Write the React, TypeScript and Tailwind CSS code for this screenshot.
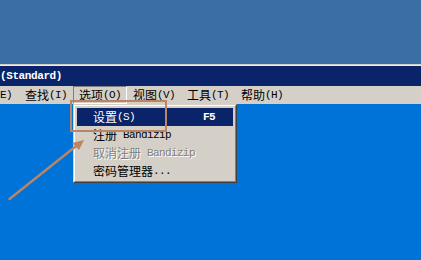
import React from "react";

const CJK = "font-['Noto_Sans_CJK_SC',sans-serif] text-[12px] leading-none";
const MONO = "font-['Liberation_Mono','Courier_New',monospace] text-[11px] tracking-[-0.6px] leading-none";

function Label({ cjk, ascii }: { cjk: string; ascii: string }) {
  return (
    <span className="flex items-center whitespace-nowrap">
      <span className={CJK}>{cjk}</span>
      <span className={MONO}>{ascii}</span>
    </span>
  );
}

const menus: [string, string][] = [
  ["查找", "(I)"],
  ["选项", "(O)"],
  ["视图", "(V)"],
  ["工具", "(T)"],
  ["帮助", "(H)"],
];

export default function App() {
  return (
    <div className="relative w-[421px] h-[260px] overflow-hidden bg-[#0073d9] flex flex-col">
      <div className="h-[64px] bg-[#3b6ea5]" />
      <div className="h-px bg-[#d4d0c8]" />
      <div className="h-px bg-[#ececec]" />
      <div className="h-[20px] bg-[#0a246a] flex items-center">
        <span className="font-['Liberation_Mono','Courier_New',monospace] text-[11px] font-bold text-white leading-none tracking-[-0.4px]">
          (Standard)
        </span>
      </div>
      <div className="h-[18px] bg-[#d4d0c8] flex text-black">
        <div className="w-[19px] h-[18px] flex items-center">
          <span className={MONO}>E)</span>
        </div>
        {menus.map(([c, a], i) => (
          <div
            key={c}
            className={
              "w-[54px] h-[18px] px-[6px] flex items-center " +
              (i === 1 ? "border-t border-l border-[#808080] border-b border-b-white border-r border-r-white pl-[5px]" : "")
            }
          >
            <Label cjk={c} ascii={a} />
          </div>
        ))}
      </div>

      {/* dropdown */}
      <div className="absolute left-[73px] top-[104px] w-[164px] h-[79px] bg-[#d4d0c8] border-t border-l border-t-[#d4d0c8] border-l-[#d4d0c8] border-r border-b border-r-[#404040] border-b-[#404040]">
        <div className="h-full border-t border-l border-t-white border-l-white border-r border-b border-r-[#808080] border-b-[#808080] p-[2px]">
          <div className="h-[18px] bg-[#0a246a] text-white flex items-center pl-[16px] pr-[18px] justify-between">
            <Label cjk="设置" ascii="(S)" />
            <span className={MONO + " font-bold"}>F5</span>
          </div>
          <div className="h-[18px] flex items-center pl-[16px] text-black">
            <span className={CJK}>注册</span>
            <span className={MONO + " ml-[6px]"}>Bandizip</span>
          </div>
          <div className="h-[18px] flex items-center pl-[16px] text-[#808080] [text-shadow:1px_1px_0_#ffffff]">
            <span className={CJK}>取消注册</span>
            <span className={MONO + " ml-[6px]"}>Bandizip</span>
          </div>
          <div className="h-[18px] flex items-center pl-[16px] text-black">
            <span className={CJK}>密码管理器</span>
            <span className={MONO}>...</span>
          </div>
        </div>
      </div>

      {/* annotation box */}
      <div className="absolute left-[70px] top-[100px] w-[97px] h-[32px] border-2 border-[#bb8462]" />

      {/* annotation arrow */}
      <svg className="absolute left-0 top-0" width="421" height="260" viewBox="0 0 421 260">
        <line x1="9.5" y1="199" x2="78" y2="144.5" stroke="#bb8462" strokeWidth="2.4" strokeLinecap="round" />
        <polygon points="84,140 72,143 79,150" fill="#bb8462" />
      </svg>
    </div>
  );
}
